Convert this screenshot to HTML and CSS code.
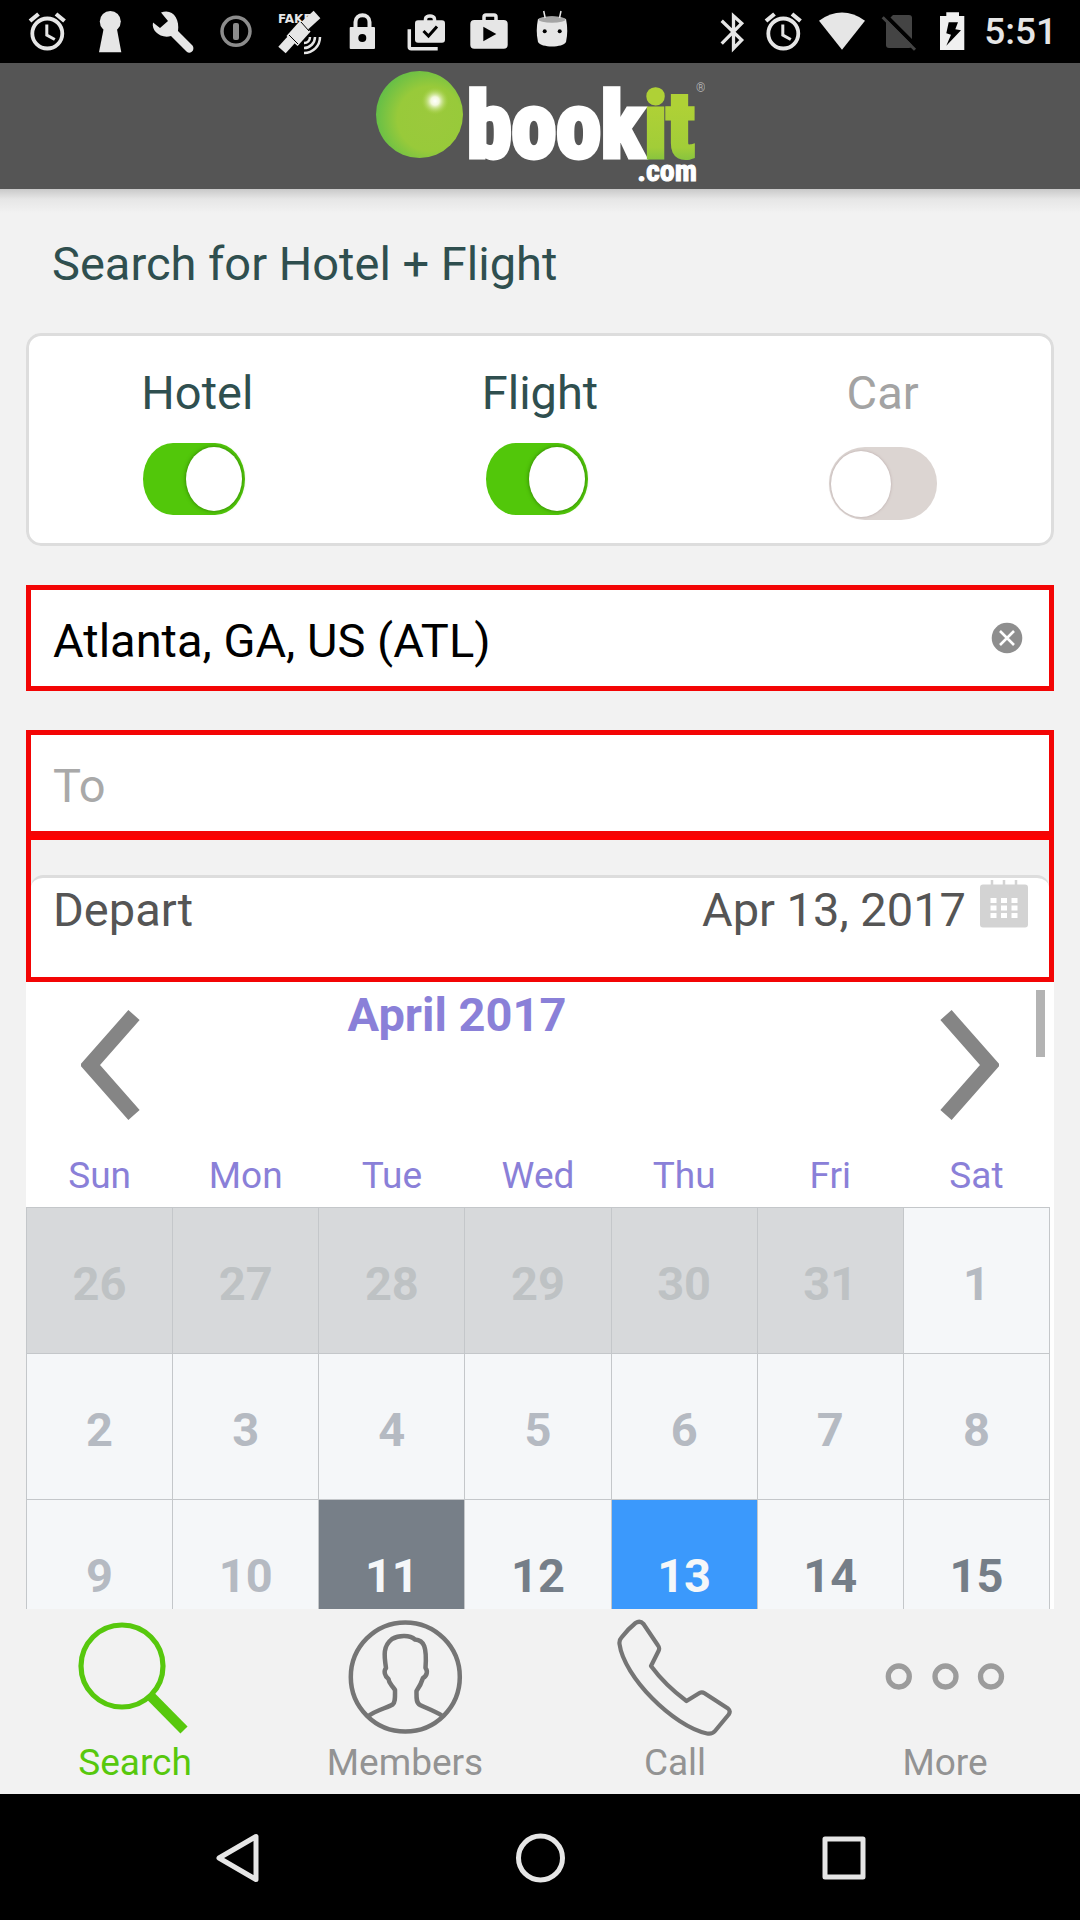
FILE: index.html
```html
<!DOCTYPE html>
<html lang="en">
<head>
<meta charset="utf-8">
<meta name="viewport" content="width=device-width">
<title>BookIt.com - Search</title>
<link rel="stylesheet" href="styles.css">
</head>
<body>
<div class="status-bar">
  <div class="status-left">
    <svg class="status-icon" viewBox="0 0 48 48" fill="none" stroke="#e6e6e6"><circle cx="24.300" cy="25.500" r="15" stroke-width="3.800"/><path d="M23.800 16.500V27l8 4.500" stroke-width="3"/><path d="M7 13l8.500-7M33 6l8.500 7" stroke-width="4.200"/></svg>
    <svg class="status-icon" viewBox="0 0 48 48" fill="#e6e6e6"><circle cx="24.300" cy="13.500" r="10.500"/><path d="M18 19h12.600l4.700 25.300H13z"/></svg>
    <svg class="status-icon" viewBox="0 0 48 48" fill="#e6e6e6"><path d="M12 4.500L19 13l-8 7-7-5.500C2 23 12 31 22 28l15.500 15.500c4 3.500 9-1.500 6-6L29 23C31 10 23 0 12 4.500z"/></svg>
    <svg class="status-icon" viewBox="0 0 48 48"><circle cx="24" cy="23.300" r="14" fill="none" stroke="#8c8c8c" stroke-width="3.500"/><rect x="21" y="15" width="6" height="17" rx="2" fill="#8c8c8c"/></svg>
    <svg class="status-icon" viewBox="0 0 48 48" fill="none" stroke="#e6e6e6"><text class="fake-label" x="3" y="15">FAKE</text><path d="M26 21L42 6.500" stroke-width="10"/><path d="M17 33l13-14.500" stroke-width="15"/><path d="M7 42l10-11" stroke-width="10"/><path d="M14 27l9 9M26 14l8 9" stroke="#000" stroke-width="1"/><path d="M45 29c0 9-7 16-16 16M40 29c0 6-5 11-11 11M35 29c0 3.500-2.500 6-6 6" stroke-width="2.500"/></svg>
    <svg class="status-icon" viewBox="0 0 48 48"><path d="M17.500 20v-6c0-9 14-9 14 0v6" fill="none" stroke="#e6e6e6" stroke-width="4"/><rect x="11.700" y="19" width="25.300" height="22" rx="1" fill="#e6e6e6"/><circle cx="24.300" cy="30" r="4"/></svg>
    <svg class="status-icon" viewBox="0 0 48 48" fill="none"><rect x="14" y="12.300" width="30" height="22.500" rx="3" fill="#e6e6e6"/><path d="M24.500 13v-2c0-4 9-4 9 0v2M8.300 21.300v17.700q0 1.700 2 1.700H36.700" stroke="#e6e6e6" stroke-width="3.500"/><path d="M22.500 23l5 5 8.500-9.500" stroke="#000" stroke-width="3"/></svg>
    <svg class="status-icon" viewBox="0 0 48 48"><rect x="6.300" y="12" width="37.400" height="28.700" rx="4" fill="#e6e6e6"/><path d="M20 13V9q0-2 2-2h8q2 0 2 2v4" fill="none" stroke="#e6e6e6" stroke-width="3.500"/><path d="M19.300 18.700v14.600L32.300 26z"/></svg>
    <svg class="status-icon" viewBox="0 0 48 48"><path d="M11 11q14-5 28 0 2.500 12 0 23c-3 6-25 6-28 0q-2.500-11 0-23z" fill="#e6e6e6"/><ellipse cx="25" cy="11.500" rx="13.500" ry="3.200" fill="#a5a5a5"/><path d="M16.700 3l1.500 7M34 3l-1.500 7" stroke="#e6e6e6" stroke-width="1.500"/><circle cx="17.700" cy="23.300" r="2"/><circle cx="32.700" cy="23.300" r="2"/></svg>
  </div>
  <div class="status-right">
    <svg class="status-icon" viewBox="0 0 48 48" fill="none" stroke="#e6e6e6" stroke-width="3.300"><path d="M13.700 35.700l20-20.400L25.500 8v32.500l8.200-8.500-20-19.300"/></svg>
    <svg class="status-icon" viewBox="0 0 48 48" fill="none" stroke="#e6e6e6"><circle cx="24.300" cy="25.500" r="15" stroke-width="3.800"/><path d="M23.800 16.500V27l8 4.500" stroke-width="3"/><path d="M7 13l8.500-7M33 6l8.500 7" stroke-width="4.200"/></svg>
    <svg class="status-icon status-icon-wide" viewBox="0 0 64 48" fill="#e6e6e6"><path d="M9 12.700Q32-3.500 55 12.700L32 41.700z"/></svg>
    <svg class="status-icon" viewBox="0 0 48 48"><path d="M16 7h16q3 0 3 3v27q0 3-3 3H12q-3 0-3-3V14z" fill="#444"/><path d="M9 8l31 31" stroke="#000" stroke-width="4"/><path d="M5.700 9.300L38 41.700" stroke="#444" stroke-width="3"/></svg>
    <svg class="status-icon" viewBox="0 0 48 48"><path d="M12 8h6.300V4.300H31V8h5.300v34H12z" fill="#f0f0f0"/><path d="M20.700 14.300H30l-2.700 7 5.700 1-14.700 15.400L23 26.700l-4.700-1.400z"/></svg>
    <time class="clock">5:51</time>
  </div>
</div>

<header class="app-header">
  <svg class="logo" viewBox="0 0 330 126" role="img" aria-label="bookit.com">
    <defs>
      <radialGradient id="ball" cx="0.620" cy="0.550" r="0.620"><stop offset="0" stop-color="#9bc93c"/><stop offset="0.600" stop-color="#98ca3a"/><stop offset="1" stop-color="#66bf47"/></radialGradient>
      <radialGradient id="shine"><stop offset="0" stop-color="#fff"/><stop offset="0.300" stop-color="#f2f8dc"/><stop offset="1" stop-color="#a5d03c" stop-opacity="0"/></radialGradient>
      <linearGradient id="leaf" x1="0" y1="0" x2="0" y2="1"><stop offset="0.300" stop-color="#afd136"/><stop offset="0.700" stop-color="#a2cd38"/><stop offset="1" stop-color="#5fb548"/></linearGradient>
    </defs>
    <circle cx="44.500" cy="51.500" r="43.500" fill="url(#ball)"/>
    <circle cx="60" cy="38" r="14" fill="url(#shine)"/>
    <text class="logo-word" x="92" y="94">book<tspan class="logo-leaf">it</tspan></text>
    <text class="logo-domain" x="322" y="118">.com</text>
    <text class="logo-mark" x="321" y="29">®</text>
  </svg>
</header>

<main class="search">
  <h1 class="search-title">Search for Hotel + Flight</h1>
  <form class="search-form">
    <div class="products">
      <label class="product">Hotel<span class="toggle-box"><input class="toggle" type="checkbox" checked></span></label>
      <label class="product">Flight<span class="toggle-box"><input class="toggle" type="checkbox" checked></span></label>
      <label class="product product-off">Car<span class="toggle-box"><input class="toggle" type="checkbox"></span></label>
    </div>
    <div class="field">
      <input class="field-input" type="text" aria-label="From" value="Atlanta, GA, US (ATL)">
      <button class="clear" type="button" aria-label="Clear"><svg class="clear-icon" viewBox="0 0 32 32"><circle cx="16" cy="16" r="15.300" fill="#8e8e8e"/><path d="M9 9l14 14M23 9L9 23" stroke="#fff" stroke-width="2.600"/></svg></button>
    </div>
    <div class="dates">
      <div class="field"><input class="field-input" type="text" aria-label="To" placeholder="To"></div>
      <div class="depart">
        <button class="depart-row" type="button">
          <span>Depart</span>
          <span class="depart-date">Apr 13, 2017</span>
          <svg class="depart-icon" viewBox="0 0 48 48"><rect y="4.500" width="48" height="43" rx="3" fill="#d3d3d3"/><path d="M12 0v6M24 0v6M36 0v6" stroke="#d3d3d3" stroke-width="2.500"/><path d="M10.500 20.500h27M10.500 28h27M10.500 35.500h27" stroke="#fff" stroke-width="5" stroke-dasharray="6 4.500"/></svg>
        </button>
      </div>
    </div>
  </form>

  <section class="calendar">
    <div class="calendar-head">
      <button class="step" type="button" aria-label="Previous month"><svg class="step-icon" viewBox="0 0 59 110"><path d="M53 5L9 55l44 50" fill="none" stroke="#858585" stroke-width="15"/></svg></button>
      <h2 class="month">April 2017</h2>
      <button class="step" type="button" aria-label="Next month"><svg class="step-icon" viewBox="0 0 59 110"><path d="M6 5l44 50L6 105" fill="none" stroke="#858585" stroke-width="15"/></svg></button>
    </div>
    <table class="days">
      <thead><tr><th>Sun</th><th>Mon</th><th>Tue</th><th>Wed</th><th>Thu</th><th>Fri</th><th>Sat</th></tr></thead>
      <tbody>
        <tr><td class="outside"><button class="day" type="button">26</button></td><td class="outside"><button class="day" type="button">27</button></td><td class="outside"><button class="day" type="button">28</button></td><td class="outside"><button class="day" type="button">29</button></td><td class="outside"><button class="day" type="button">30</button></td><td class="outside"><button class="day" type="button">31</button></td><td><button class="day" type="button">1</button></td></tr>
        <tr><td><button class="day" type="button">2</button></td><td><button class="day" type="button">3</button></td><td><button class="day" type="button">4</button></td><td><button class="day" type="button">5</button></td><td><button class="day" type="button">6</button></td><td><button class="day" type="button">7</button></td><td><button class="day" type="button">8</button></td></tr>
        <tr><td><button class="day" type="button">9</button></td><td><button class="day" type="button">10</button></td><td class="today"><button class="day" type="button">11</button></td><td class="open"><button class="day" type="button">12</button></td><td class="selected"><button class="day" type="button">13</button></td><td class="open"><button class="day" type="button">14</button></td><td class="open"><button class="day" type="button">15</button></td></tr>
      </tbody>
    </table>
    <div class="scroll-thumb"></div>
  </section>
</main>

<nav class="tabs">
  <a class="tab tab-active" href="#search"><svg class="tab-icon" viewBox="0 0 120 120" fill="none" stroke="#57c80d"><circle cx="47" cy="48" r="41" stroke-width="5.200"/><path d="M74.500 77l34.500 35" stroke-width="10"/></svg>Search</a>
  <a class="tab" href="#members"><svg class="tab-icon" viewBox="0 0 120 120" fill="none" stroke="#757575" stroke-width="4.500" stroke-linejoin="round"><circle cx="60.300" cy="59" r="54.500"/><path d="M22.800 98.500C31 92 42 90 47.600 86.500 50.500 84 50 79 50 72c-3-5-6-6-6.500-11-4-3-5-8-2.500-11C39 37 38 28 47 21c7-4 18-4 23 .5C79 22 82 29 80.500 50c2.500 3 1.500 8-2.500 10-1.500 5-3 8-6.500 13 0 7-.5 12 3.500 14C81 90 90 93 97.500 98"/></svg>Members</a>
  <a class="tab" href="#call"><svg class="tab-icon" viewBox="0 0 120 120" fill="none" stroke="#757575" stroke-width="4.200" stroke-linejoin="round"><path d="M20.500 5q4.500-3 8 1L43 27.500q2 2.500.5 5.500L36 48q14 19 35.500 35l13-8q2.500-1.500 5 .2L113 90.500q3 2.500.7 6L100 113q-3 3.500-8 2.500C58 108 9 59 4.500 26q-.5-4 2-6.500Q13 11 20.500 5z"/></svg>Call</a>
  <a class="tab" href="#more"><svg class="tab-icon" viewBox="0 0 120 120" fill="none" stroke="#9c9c9c" stroke-width="5.300"><circle cx="13.800" cy="58.500" r="10.500"/><circle cx="60.500" cy="58.500" r="10.500"/><circle cx="106" cy="58.500" r="10.500"/></svg>More</a>
</nav>

<div class="system-nav">
  <button class="system-button" type="button" aria-label="Back"><svg class="system-icon" viewBox="0 0 52 52"><path d="M8 26L45 4.500v43z"/></svg></button>
  <button class="system-button" type="button" aria-label="Home"><svg class="system-icon" viewBox="0 0 52 52"><circle cx="26.500" cy="26" r="22"/></svg></button>
  <button class="system-button" type="button" aria-label="Recent apps"><svg class="system-icon" viewBox="0 0 52 52"><rect x="8" y="7" width="38" height="38"/></svg></button>
</div>
</body>
</html>
```
FILE: styles.css
```css
* { box-sizing: border-box; }

body {
  display: flex;
  flex-direction: column;
  height: 100vh;
  margin: 0;
  background: #f2f2f2;
  font-family: Roboto, sans-serif;
  font-size: 47px;
  line-height: 56px;
}

button, input {
  margin: 0;
  padding: 0;
  border: 0;
  background: none;
  color: inherit;
  font: inherit;
}

svg { display: block; }

/* Device status bar */
.status-bar {
  display: flex;
  justify-content: space-between;
  padding: 8px 23px 7px;
  background: #000;
}
.status-left { display: flex; gap: 15px; }
.status-right { display: flex; gap: 3px; }
.status-icon { width: 48px; height: 48px; }
.status-icon-wide { width: 64px; }
.fake-label { fill: #e6e6e6; stroke: none; font: bold 12px "DejaVu Sans", sans-serif; }
.clock { padding-left: 5px; color: #e6e6e6; font-size: 37px; font-weight: 500; line-height: 48px; }

/* Brand header */
.app-header {
  display: flex;
  justify-content: center;
  background: #555;
}
.logo { width: 330px; height: 126px; }
.logo-word, .logo-domain {
  fill: #fff;
  stroke: #fff;
  font-family: "Liberation Sans Narrow", "Roboto Condensed", "Open Sans Condensed", "DejaVu Sans Condensed", sans-serif;
  font-weight: bold;
}
.logo-word { font-size: 90px; stroke-width: 5px; }
.logo-leaf { fill: url(#leaf); stroke: url(#leaf); }
.logo-domain { font-size: 30px; stroke-width: 1px; text-anchor: end; }
.logo-mark { fill: #aaa; font-size: 12px; }

/* Search form */
.search {
  display: flex;
  flex: 1;
  flex-direction: column;
  min-height: 0;
  padding: 0 26px;
  background: linear-gradient(#c9c9c9, #e6e6e6 10px, #f2f2f2 24px);
}
.search-title {
  margin: 0;
  padding: 47px 26px 41px;
  color: #2f4f4f;
  font-size: 47px;
  font-weight: 400;
}
.search-form { display: flex; flex-direction: column; gap: 39px; }
.products {
  display: grid;
  grid-template-columns: repeat(3, 1fr);
  padding: 32px 0 26px;
  border-radius: 15px;
  background: #fff;
  box-shadow: inset 0 0 0 3px #ddd;
}
.product {
  display: flex;
  flex-direction: column;
  align-items: center;
  gap: 22px;
  color: #2f4f4f;
}
.product-off { color: #a3a3a3; }
.toggle-box { display: flex; width: 108px; height: 77px; }
.toggle {
  position: relative;
  align-self: flex-end;
  width: 108px;
  height: 73px;
  border-radius: 36px;
  background: #dcd5d2;
  appearance: none;
}
.toggle::before {
  position: absolute;
  top: 4px;
  left: 2px;
  width: 60px;
  height: 66px;
  border-radius: 50%;
  background: #fff;
  box-shadow: 0 0 3px #b8a8a8;
  content: "";
}
.toggle:checked {
  align-self: flex-start;
  width: 102px;
  height: 72px;
  border-radius: 30px / 36px;
  background: #52c70a;
}
.toggle:checked::before {
  left: 43px;
  width: 56px;
  height: 64px;
  box-shadow: 0 0 4px #2c7a00;
}
.field {
  display: flex;
  align-items: center;
  height: 106px;
  padding: 0 26px 0 22px;
  border: 5px solid #f30505;
  background: #fff;
  color: #000;
}
.field-input { flex: 1; min-width: 0; height: 60px; padding-top: 4px; outline: 0; }
.field-input::placeholder { color: #a9a9a9; opacity: 1; }
.clear-icon { width: 32px; height: 32px; }
.depart {
  padding-top: 35px;
  border: 5px solid #f30505;
  border-top: 4px solid #f00;
}
.depart-row {
  display: flex;
  align-items: flex-start;
  width: 100%;
  height: 102px;
  padding: 2px 21px 0 22px;
  border-top: 3px solid #ddd;
  border-radius: 12px 12px 0 0;
  background: #fff;
  color: #555;
  line-height: 60px;
  text-align: left;
}
.depart-date { margin-left: auto; }
.depart-icon { width: 48px; height: 48px; margin-left: 14px; }

/* Month calendar */
.calendar {
  position: relative;
  flex: 1;
  min-height: 0;
  overflow: hidden;
  background: #fff;
}
.calendar-head { display: flex; align-items: flex-start; padding: 5px 55px 35px; }
.step { padding-top: 23px; }
.step-icon { width: 59px; height: 110px; }
.month {
  flex: 1;
  margin: 0;
  padding-right: 166px;
  color: #8a80d8;
  font-size: 47px;
  font-weight: 700;
  text-align: center;
}
.days {
  width: calc(100% - 4px);
  border-collapse: collapse;
  table-layout: fixed;
}
.days th {
  padding: 0 0 10px;
  color: #8a80d8;
  font-size: 37px;
  font-weight: 400;
  line-height: 42px;
}
.days td {
  padding: 0;
  border: 1px solid #c4c7ca;
  background: #f5f7f9;
  color: #b5bac2;
}
.days .outside { background: #d7d9db; color: #bec2c4; }
.days .open { color: #757e88; }
.days .today { background: #777f88; color: #f5f7f9; }
.days .selected { background: #3b99fc; color: #f5f7f9; }
.day { display: block; width: 100%; height: 145px; padding-top: 6px; font-weight: 700; }
.scroll-thumb {
  position: absolute;
  top: 8px;
  right: 9px;
  width: 9px;
  height: 67px;
  background: #b3b3b3;
}

/* App tabs */
.tabs { display: grid; grid-template-columns: repeat(4, 1fr); padding: 9px 0 10px; }
.tab {
  display: flex;
  flex-direction: column;
  align-items: center;
  gap: 4px;
  color: #939393;
  font-size: 37px;
  line-height: 42px;
  text-decoration: none;
}
.tab-active { color: #57c80d; }
.tab-icon { width: 120px; height: 120px; }

/* Device navigation bar */
.system-nav {
  display: grid;
  grid-template-columns: repeat(3, 1fr);
  padding: 38px 85px 36px;
  background: #000;
}
.system-button { display: flex; justify-content: center; }
.system-icon {
  width: 52px;
  height: 52px;
  fill: none;
  stroke: #e6e6e6;
  stroke-width: 5px;
  stroke-linejoin: round;
}
```
